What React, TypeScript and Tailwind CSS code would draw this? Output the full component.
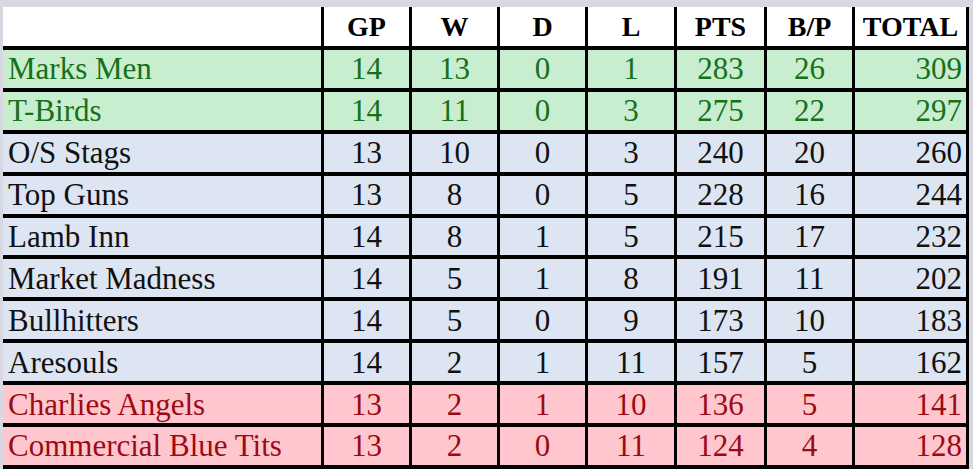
import React from "react";

type Row = { name: string; v: number[]; kind: "g" | "b" | "r" };

const rows: Row[] = [
  { name: "Marks Men", v: [14, 13, 0, 1, 283, 26, 309], kind: "g" },
  { name: "T-Birds", v: [14, 11, 0, 3, 275, 22, 297], kind: "g" },
  { name: "O/S Stags", v: [13, 10, 0, 3, 240, 20, 260], kind: "b" },
  { name: "Top Guns", v: [13, 8, 0, 5, 228, 16, 244], kind: "b" },
  { name: "Lamb Inn", v: [14, 8, 1, 5, 215, 17, 232], kind: "b" },
  { name: "Market Madness", v: [14, 5, 1, 8, 191, 11, 202], kind: "b" },
  { name: "Bullhitters", v: [14, 5, 0, 9, 173, 10, 183], kind: "b" },
  { name: "Aresouls", v: [14, 2, 1, 11, 157, 5, 162], kind: "b" },
  { name: "Charlies Angels", v: [13, 2, 1, 10, 136, 5, 141], kind: "r" },
  { name: "Commercial Blue Tits", v: [13, 2, 0, 11, 124, 4, 128], kind: "r" },
];

const headers = ["GP", "W", "D", "L", "PTS", "B/P", "TOTAL"];

const gridCols = "grid grid-cols-[321px_88px_88px_88px_89px_90px_88px_114px]";

export default function App() {
  return (
    <div className="w-[973px] h-[469px] overflow-hidden bg-[#d8d8e2] pt-[7px] pl-[3px] font-['Liberation_Serif',serif]">
      <div className="w-[966px]">
        <div className={`${gridCols} h-[43px] bg-white border-b-4 border-black`}>
          <div className="border-r-[3px] border-black" />
          {headers.map((h) => (
            <div
              key={h}
              className="border-r-[3px] border-black flex items-center justify-center text-[28px] font-bold text-black leading-none"
            >
              {h}
            </div>
          ))}
        </div>
        {rows.map((r) => {
          const bg =
            r.kind === "g" ? "bg-[#c8eecf]" : r.kind === "r" ? "bg-[#ffc7cd]" : "bg-[#dce5f1]";
          const fg =
            r.kind === "g" ? "text-[#16701c]" : r.kind === "r" ? "text-[#9c0a14]" : "text-[#111111]";
          return (
            <div key={r.name} className={`${gridCols} h-[41.9px] border-b-4 border-black ${bg} ${fg} text-[31px] leading-none`}>
              <div className="border-r-[3px] border-black flex items-center pl-[5px] whitespace-nowrap">
                {r.name}
              </div>
              {r.v.map((n, i) => (
                <div
                  key={i}
                  className={`border-r-[3px] border-black flex items-center ${
                    i === 6 ? "justify-end pr-[4px]" : "justify-center"
                  }`}
                >
                  {n}
                </div>
              ))}
            </div>
          );
        })}
      </div>
    </div>
  );
}
